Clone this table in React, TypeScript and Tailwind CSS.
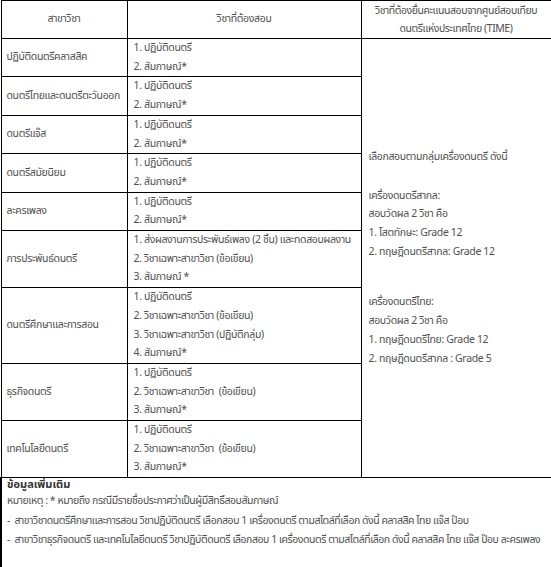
const font = {
  fontFamily: 'Tahoma, "Noto Sans Thai", "Noto Sans", "DejaVu Sans", sans-serif',
};

type Row = { major: string; subjects: string[] };

const rows: Row[] = [
  { major: "ปฏิบัติดนตรีคลาสสิค", subjects: ["1. ปฏิบัติดนตรี", "2. สัมภาษณ์*"] },
  { major: "ดนตรีไทยและดนตรีตะวันออก", subjects: ["1. ปฏิบัติดนตรี", "2. สัมภาษณ์*"] },
  { major: "ดนตรีแจ๊ส", subjects: ["1. ปฏิบัติดนตรี", "2. สัมภาษณ์*"] },
  { major: "ดนตรีสมัยนิยม", subjects: ["1. ปฏิบัติดนตรี", "2. สัมภาษณ์*"] },
  { major: "ละครเพลง", subjects: ["1. ปฏิบัติดนตรี", "2. สัมภาษณ์*"] },
  {
    major: "การประพันธ์ดนตรี",
    subjects: [
      "1. ส่งผลงานการประพันธ์เพลง (2 ชิ้น) และทดสอบผลงาน",
      "2. วิชาเฉพาะสาขาวิชา (ข้อเขียน)",
      "3. สัมภาษณ์ *",
    ],
  },
  {
    major: "ดนตรีศึกษาและการสอน",
    subjects: [
      "1. ปฏิบัติดนตรี",
      "2. วิชาเฉพาะสาขาวิชา (ข้อเขียน)",
      "3. วิชาเฉพาะสาขาวิชา (ปฏิบัติกลุ่ม)",
      "4. สัมภาษณ์*",
    ],
  },
  {
    major: "ธุรกิจดนตรี",
    subjects: ["1. ปฏิบัติดนตรี", "2. วิชาเฉพาะสาขาวิชา  (ข้อเขียน)", "3. สัมภาษณ์*"],
  },
  {
    major: "เทคโนโลยีดนตรี",
    subjects: ["1. ปฏิบัติดนตรี", "2. วิชาเฉพาะสาขาวิชา  (ข้อเขียน)", "3. สัมภาษณ์*"],
  },
];

export default function App() {
  return (
    <div
      className="w-[551px] h-[567px] overflow-hidden bg-white text-[#505050] text-[10.5px] leading-[18.7px] tracking-[-0.35px]"
      style={font}
    >
      <table className="w-[550px] border-collapse table-fixed">
        <colgroup>
          <col className="w-[126px]" />
          <col className="w-[234px]" />
          <col className="w-[190px]" />
        </colgroup>
        <tbody>
          <tr className="h-[38px]">
            <td className="border border-black text-center align-middle">สาขาวิชา</td>
            <td className="border border-black text-center align-middle">วิชาที่ต้องสอบ</td>
            <td className="border border-black text-center align-middle whitespace-nowrap tracking-[-0.45px] leading-[18px]">
              <div>วิชาที่ต้องยื่นคะแนนสอบจากศูนย์สอบเทียบ</div>
              <div>ดนตรีแห่งประเทศไทย (TIME)</div>
            </td>
          </tr>
          {rows.map((r, i) => (
            <tr key={r.major}>
              <td className="border border-black pl-[5px] align-middle whitespace-nowrap">{r.major}</td>
              <td className="border border-black pl-[6px] align-middle whitespace-pre">
                {r.subjects.map((s) => (
                  <div key={s}>{s}</div>
                ))}
              </td>
              {i === 0 && (
                <td rowSpan={rows.length} className="border border-black pl-[7px] align-middle whitespace-nowrap">
                  <div className="mb-[20px]">เลือกสอบตามกลุ่มเครื่องดนตรี ดังนี้</div>
                  <div>เครื่องดนตรีสากล:</div>
                  <div>สอบวัดผล 2 วิชา คือ</div>
                  <div>1. โสตทักษะ: Grade 12</div>
                  <div className="mb-[32px]">2. ทฤษฎีดนตรีสากล: Grade 12</div>
                  <div>เครื่องดนตรีไทย:</div>
                  <div>สอบวัดผล 2 วิชา คือ</div>
                  <div>1. ทฤษฎีดนตรีไทย: Grade 12</div>
                  <div>2. ทฤษฎีดนตรีสากล : Grade 5</div>
                </td>
              )}
            </tr>
          ))}
          <tr>
            <td
              colSpan={3}
              className="border border-black border-b-2 border-l-2 pl-[5px] pb-[22px] align-top leading-[19.5px] text-[10.5px] tracking-[-0.45px]"
            >
              <div className="leading-[14px] font-bold text-[#333] text-[11px] tracking-normal">ข้อมูลเพิ่มเติม</div>
              <div className="whitespace-pre">หมายเหตุ : * หมายถึง กรณีมีรายชื่อประกาศว่าเป็นผู้มีสิทธิ์สอบสัมภาษณ์</div>
              <div className="whitespace-pre">-  สาขาวิชาดนตรีศึกษาและการสอน วิชาปฏิบัติดนตรี เลือกสอบ 1 เครื่องดนตรี ตามสไตล์ที่เลือก ดังนี้ คลาสสิค ไทย แจ๊ส ป๊อบ</div>
              <div className="whitespace-pre">-  สาขาวิชาธุรกิจดนตรี และเทคโนโลยีดนตรี วิชาปฏิบัติดนตรี เลือกสอบ 1 เครื่องดนตรี ตามสไตล์ที่เลือก ดังนี้ คลาสสิค ไทย แจ๊ส ป๊อบ ละครเพลง</div>
            </td>
          </tr>
        </tbody>
      </table>
    </div>
  );
}
